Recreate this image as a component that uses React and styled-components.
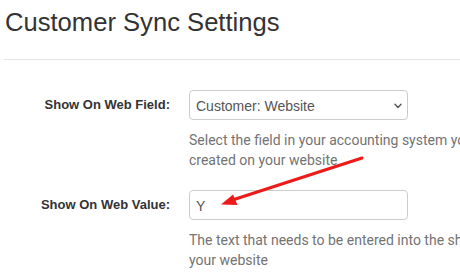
import React from "react";
import styled, { createGlobalStyle } from "styled-components";

const Global = createGlobalStyle`
  html, body {
    margin: 0;
    padding: 0;
    background: #ffffff;
    overflow: hidden;
  }
  body {
    font-family: "Liberation Sans", Arial, sans-serif;
    color: #333333;
  }
`;

const Page = styled.div`
  position: relative;
  width: 460px;
  height: 277px;
  padding-left: 4px;
  box-sizing: border-box;
  overflow: hidden;
`;

const Title = styled.h1`
  margin: 7px 0 0 1px;
  font-family: "Liberation Sans", Arial, sans-serif;
  font-size: 25.6px;
  font-weight: 400;
  line-height: 30px;
  color: #333333;
  white-space: nowrap;
`;

const Rule = styled.hr`
  margin: 22px 0 30px 0;
  border: 0;
  border-top: 1px solid #e4e4e4;
  width: 600px;
`;

const Form = styled.div`
  display: flex;
  flex-direction: column;
  gap: 20px;
`;

const Row = styled.div`
  display: grid;
  grid-template-columns: 166px 1fr;
  column-gap: 19px;
  align-items: start;
`;

const Label = styled.label`
  text-align: right;
  font-family: "Liberation Sans", Arial, sans-serif;
  font-size: 13px;
  font-weight: 700;
  line-height: 30px;
  color: #333333;
  white-space: nowrap;
`;

const Field = styled.div`
  display: flex;
  flex-direction: column;
  min-width: 0;
`;

const Control = styled.div`
  position: relative;
  width: 219px;
  height: 30px;
  box-sizing: border-box;
  border: 1px solid #cccccc;
  border-radius: 4px;
  background: #ffffff;
  display: flex;
  align-items: center;
  padding: 0 6px;
  font-family: "Liberation Sans", Arial, sans-serif;
  font-size: 14px;
  color: #555555;
`;

const ControlText = styled.span`
  flex: 1;
  white-space: nowrap;
  padding-top: 1px;
`;

const Chevron = styled.svg`
  flex: none;
  width: 8px;
  height: 6px;
  margin-right: -1px;
  margin-top: 2px;
`;

const Help = styled.p`
  margin: 10px 0 0 0;
  font-family: Roboto, "Liberation Sans", sans-serif;
  font-size: 14px;
  line-height: 20px;
  color: #737373;
  white-space: nowrap;
`;

const HelpLine = styled.span`
  display: block;
`;

const Overlay = styled.svg`
  position: absolute;
  left: 0;
  top: 0;
  width: 460px;
  height: 277px;
  pointer-events: none;
`;

export default function App() {
  return (
    <>
      <Global />
      <Page>
        <Title>Customer Sync Settings</Title>
        <Rule />
        <Form>
          <Row>
            <Label>Show On Web Field:</Label>
            <Field>
              <Control>
                <ControlText>Customer: Website</ControlText>
                <Chevron viewBox="0 0 8 6">
                  <path d="M1 1.2 L4 4.4 L7 1.2" fill="none" stroke="#555" strokeWidth="1.4" strokeLinecap="round" strokeLinejoin="round" />
                </Chevron>
              </Control>
              <Help>
                <HelpLine>Select the field in your accounting system you want to use</HelpLine>
                <HelpLine>created on your website</HelpLine>
              </Help>
            </Field>
          </Row>
          <Row>
            <Label>Show On Web Value:</Label>
            <Field>
              <Control>
                <ControlText>Y</ControlText>
              </Control>
              <Help>
                <HelpLine>The text that needs to be entered into the show on web field</HelpLine>
                <HelpLine>your website</HelpLine>
              </Help>
            </Field>
          </Row>
        </Form>
        <Overlay viewBox="0 0 460 277">
          <line x1="362" y1="158" x2="234" y2="199.5" stroke="#ee1a1a" strokeWidth="3" strokeLinecap="round" />
          <polygon points="221,204.5 233,194.5 237.5,205" fill="#ee1a1a" />
        </Overlay>
      </Page>
    </>
  );
}
